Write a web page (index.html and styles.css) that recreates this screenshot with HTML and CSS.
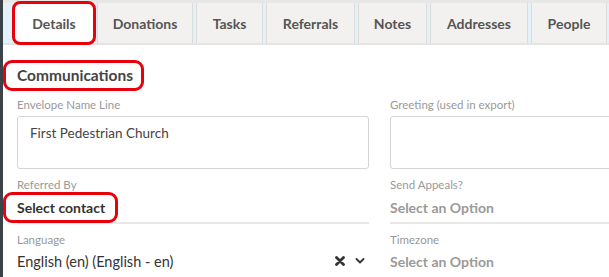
FILE: index.html
```html
<!DOCTYPE html>
<html lang="en">
<head>
    <meta charset="UTF-8">
    <title>Contact Details</title>
    <link rel="stylesheet" href="styles.css">
</head>
<body>
    <div class="tab-bar">
        <div class="tab active marked">Details</div>
        <div class="tab">Donations</div>
        <div class="tab">Tasks</div>
        <div class="tab">Referrals</div>
        <div class="tab">Notes</div>
        <div class="tab">Addresses</div>
        <div class="tab">People</div>
    </div>

    <div class="content">
        <h2 class="section-title"><span class="marked">Communications</span></h2>

        <div class="form-grid">
            <div class="field">
                <label class="field-label">Envelope Name Line</label>
                <div class="text-box">First Pedestrian Church</div>
            </div>
            <div class="field">
                <label class="field-label">Greeting (used in export)</label>
                <div class="text-box"></div>
            </div>

            <div class="field">
                <label class="field-label">Referred By</label>
                <div class="select-line">
                    <span class="select-value strong marked">Select contact</span>
                </div>
            </div>
            <div class="field">
                <label class="field-label">Send Appeals?</label>
                <div class="select-line">
                    <span class="select-value placeholder">Select an Option</span>
                </div>
            </div>

            <div class="field">
                <label class="field-label">Language</label>
                <div class="select-line no-rule">
                    <span class="select-value">English (en) (English - en)</span>
                    <span class="select-icons">
                        <svg width="10" height="10" viewBox="0 0 10 10"><path d="M1.5 1.5 L8.5 8.5 M8.5 1.5 L1.5 8.5" stroke="#333" stroke-width="2.8" stroke-linecap="round"/></svg>
                        <svg width="10" height="8" viewBox="0 0 10 8"><path d="M1.5 2 L5 5.5 L8.5 2" stroke="#333" stroke-width="1.8" fill="none" stroke-linecap="round" stroke-linejoin="round"/></svg>
                    </span>
                </div>
            </div>
            <div class="field">
                <label class="field-label">Timezone</label>
                <div class="select-line no-rule">
                    <span class="select-value placeholder">Select an Option</span>
                </div>
            </div>
        </div>
    </div>
</body>
</html>
```

FILE: styles.css
```css
body {
    margin: 0;
    width: 609px;
    height: 277px;
    overflow: hidden;
    background-color: #FFFFFF;
    border-left: 3px solid #3C4348;
    box-sizing: border-box;
    font-family: 'Lato', 'Liberation Sans', sans-serif;
    color: #333333;
}

/* red annotation boxes */
.marked {
    outline: 3px solid #E8000B;
    border-radius: 6px;
}

.tab-bar {
    display: flex;
    gap: 3px;
    height: 40px;
    padding-left: 11px;
    background-color: #E2F1FA;
    border-top: 3px solid #E7E7E6;
    border-bottom: 2px solid #E4E4E2;
    white-space: nowrap;
}

.tab {
    display: flex;
    align-items: center;
    justify-content: center;
    flex: none;
    background-color: #F2F1EF;
    border-left: 1px solid #DCDCDA;
    border-right: 1px solid #DCDCDA;
    color: #555555;
    font-size: 14px;
    font-weight: 700;
}

.tab:nth-child(1) { width: 78px; }
.tab:nth-child(2) { width: 94px; }
.tab:nth-child(3) { width: 65px; }
.tab:nth-child(4) { width: 87px; }
.tab:nth-child(5) { width: 67px; }
.tab:nth-child(6) { width: 96px; }
.tab:nth-child(7) { width: 74px; }

.tab.active {
    background-color: #FFFFFF;
    outline-offset: -1px;
}

.content {
    padding: 0 0 0 14px;
}

.section-title {
    margin: 18px 0 0 0;
    height: 26px;
    font-size: 15.5px;
    font-weight: 700;
    color: #444444;
}

.section-title .marked {
    display: inline-block;
    padding: 0 8px 0 11px;
    margin-left: -11px;
    line-height: 25px;
}

.form-grid {
    display: grid;
    grid-template-columns: 352px 352px;
    column-gap: 21px;
    margin-top: 8px;
}

.field {
    display: flex;
    flex-direction: column;
    margin-bottom: 8px;
}

.field-label {
    font-size: 11.5px;
    color: #999999;
    line-height: 15px;
    margin-bottom: 2px;
}

.text-box {
    height: 53px;
    margin-top: 2px;
    box-sizing: border-box;
    padding: 8px 12px;
    border: 1px solid #D5D5D3;
    border-radius: 3px;
    font-size: 13.5px;
    color: #444444;
}

.select-line {
    display: flex;
    align-items: center;
    justify-content: space-between;
    height: 30px;
    box-sizing: border-box;
    padding-bottom: 2px;
    border-bottom: 2px solid #E8E8E6;
}

.select-line.no-rule {
    height: 25px;
    padding-bottom: 1px;
    border-bottom: none;
}

.select-value {
    font-size: 14.5px;
    color: #333333;
}

.select-value.strong {
    font-size: 14px;
    font-weight: 700;
    padding: 4px 10px 4px 11px;
    margin-left: -11px;
}

.select-value.placeholder {
    font-size: 14px;
    color: #9A9A98;
    font-weight: 700;
}

.select-icons {
    display: flex;
    align-items: center;
    gap: 10px;
    padding-right: 4px;
}
```
